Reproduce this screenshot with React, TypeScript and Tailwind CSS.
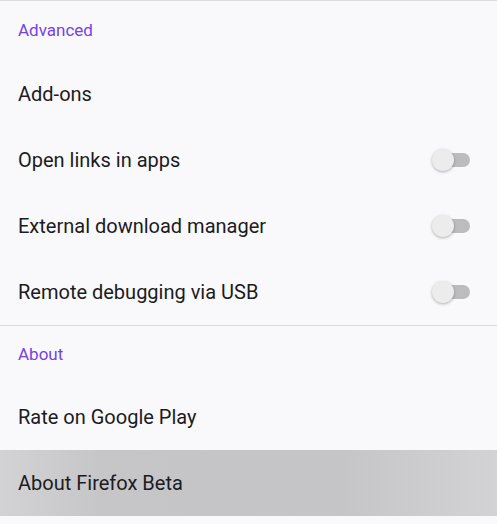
import React from "react";

const advanced = [
  { label: "Add-ons", toggle: false },
  { label: "Open links in apps", toggle: true },
  { label: "External download manager", toggle: true },
  { label: "Remote debugging via USB", toggle: true },
];

function Toggle() {
  return (
    <div className="relative w-[38px] h-[22px] flex items-center">
      <div className="absolute right-0 w-[30px] h-[14px] rounded-full bg-[#bcbcbe]" />
      <div className="absolute left-0 w-[22px] h-[22px] rounded-full bg-[#ececec] shadow-[0_1px_3px_rgba(0,0,0,0.3)]" />
    </div>
  );
}

function Header({ title, h }: { title: string; h: string }) {
  return (
    <div className={`${h} flex items-center px-[18px]`}>
      <p className="text-[17px] text-[#7542e5]">{title}</p>
    </div>
  );
}

function Row({
  label,
  toggle,
  active,
}: {
  label: string;
  toggle?: boolean;
  active?: boolean;
}) {
  return (
    <div
      className={`h-[66px] flex items-center justify-between pl-[18px] pr-[27px] ${
        active
          ? "bg-[linear-gradient(to_right,#d3d3d5_0%,#c6c6c8_20%,#c5c5c7_68%,#d3d3d5_100%)]"
          : ""
      }`}
    >
      <p className="text-[20px] text-[#1c1b22]">{label}</p>
      {toggle && <Toggle />}
    </div>
  );
}

export default function App() {
  return (
    <div
      className="w-[497px] h-[524px] overflow-hidden bg-[#f9f9fb]"
      style={{ fontFamily: "Roboto, 'Noto Sans', sans-serif" }}
    >
      <div className="h-px bg-[#dcdcde]" />
      <Header title="Advanced" h="h-[60px]" />
      {advanced.map((item) => (
        <Row key={item.label} label={item.label} toggle={item.toggle} />
      ))}
      <div className="h-px bg-[#dcdcde]" />
      <Header title="About" h="h-[58px]" />
      <Row label="Rate on Google Play" />
      <Row label="About Firefox Beta" active />
    </div>
  );
}
